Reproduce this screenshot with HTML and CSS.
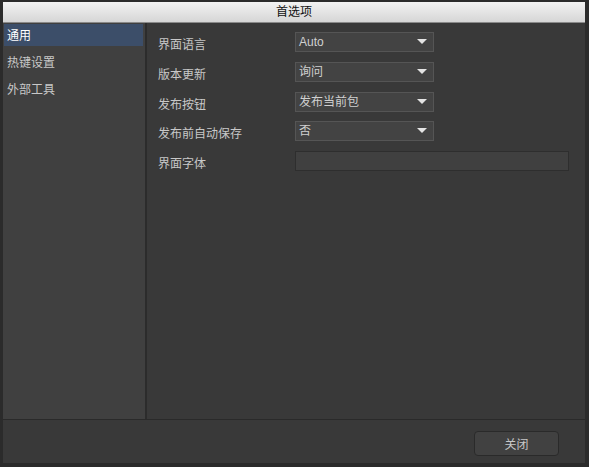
FILE: index.html
```html
<!DOCTYPE html>
<html>
<head>
    <meta charset="utf-8">
    <title>首选项</title>
    <link rel="stylesheet" href="styles.css">
</head>
<body>
    <div class="window">
        <div class="titlebar">首选项</div>

        <div class="main">
            <ul class="sidebar">
                <li class="active">通用</li>
                <li>热键设置</li>
                <li>外部工具</li>
            </ul>

            <div class="settings">
                <div class="row">
                    <span class="label">界面语言</span>
                    <div class="combo">Auto<span class="arrow"></span></div>
                </div>
                <div class="row">
                    <span class="label">版本更新</span>
                    <div class="combo">询问<span class="arrow"></span></div>
                </div>
                <div class="row">
                    <span class="label">发布按钮</span>
                    <div class="combo">发布当前包<span class="arrow"></span></div>
                </div>
                <div class="row">
                    <span class="label">发布前自动保存</span>
                    <div class="combo">否<span class="arrow"></span></div>
                </div>
                <div class="row">
                    <span class="label">界面字体</span>
                    <input type="text" class="field">
                </div>
            </div>
        </div>

        <div class="footer">
            <button class="btn">关闭</button>
        </div>
    </div>
</body>
</html>
```

FILE: styles.css
```css
html, body {
    margin: 0;
    padding: 0;
    background-color: #2b2b2b;
}

body {
    font-family: "Liberation Sans", "Noto Sans CJK SC", sans-serif;
    font-size: 12px;
    color: #c6c6c6;
}

.window {
    width: 582px;
    height: 461px;
    margin: 2px 0 0 3px;
    display: flex;
    flex-direction: column;
    background-color: #393939;
}

.titlebar {
    height: 20px;
    line-height: 21px;
    text-align: center;
    color: #111;
    font-size: 12px;
    background: linear-gradient(#f2f2f2, #d6d6d6);
    border-bottom: 1px solid #8a8a8a;
}

.main {
    display: flex;
    height: 396px;
    border-bottom: 1px solid #2a2a2a;
}

/* left category list */
.sidebar {
    list-style-type: none;
    margin: 0;
    padding: 1px 2px 0 1px;
    width: 139px;
    background-color: #404040;
    border-right: 2px solid #2c2c2c;
}

.sidebar li {
    height: 22px;
    line-height: 24px;
    padding-left: 3px;
    margin-bottom: 5px;
    color: #c8c8c8;
}

.sidebar li.active {
    background-color: #3c4e69;
    color: #fff;
}

/* right settings form */
.settings {
    flex: 1;
    padding: 9px 16px 0 11px;
    background-color: #393939;
}

.row {
    display: flex;
    align-items: center;
    height: 20px;
    margin-bottom: 10px;
}

.row:nth-child(4) {
    margin-top: -1px;
}

.label {
    width: 137px;
    padding-top: 2px;
    color: #c8c8c8;
}

.combo {
    position: relative;
    box-sizing: border-box;
    width: 139px;
    height: 20px;
    line-height: 18px;
    padding-left: 3px;
    background-color: #434343;
    border: 1px solid #555;
    color: #d0d0d0;
}

.arrow {
    position: absolute;
    right: 6px;
    top: 6px;
    width: 0;
    height: 0;
    border-left: 5px solid transparent;
    border-right: 5px solid transparent;
    border-top: 5px solid #e4e4e4;
}

.field {
    box-sizing: border-box;
    width: 274px;
    height: 20px;
    margin: 0;
    padding: 0 3px;
    background-color: #404040;
    border: 1px solid #2e2e2e;
    color: #d0d0d0;
}

.footer {
    flex: 1;
    display: flex;
    justify-content: flex-end;
    align-items: flex-start;
    padding: 11px 26px 0 0;
    background-color: #393939;
}

.btn {
    width: 85px;
    height: 25px;
    background-color: #414141;
    border: 1px solid #2a2a2a;
    border-radius: 4px;
    color: #c8c8c8;
    font-family: "Liberation Sans", "Noto Sans CJK SC", sans-serif;
    font-size: 12px;
    cursor: pointer;
}
```
